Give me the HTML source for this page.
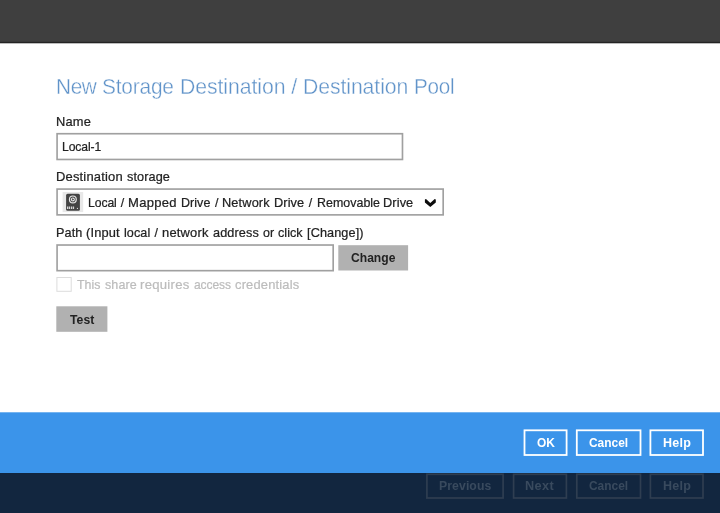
<!DOCTYPE html>
<html><head><meta charset="utf-8">
<style>
html,body{margin:0;padding:0;}
body{width:720px;height:513px;overflow:hidden;background:#fff;position:relative;font-family:"Liberation Sans",sans-serif;color:#1a1a1a;}
.abs{position:absolute;}
#shapes{left:0;top:0;}
.t{position:absolute;will-change:transform;-webkit-text-stroke:0.22px currentColor;white-space:nowrap;font-size:12.4px;line-height:16px;color:#222;letter-spacing:0.25px;}
.b{font-weight:bold;font-size:12px;letter-spacing:0;-webkit-text-stroke:0;}
#title{left:57px;top:73.2px;width:420px;height:28px;font-size:21.6px;color:#6093c9;line-height:28px;letter-spacing:0.34px;-webkit-text-stroke:0.35px #fff;}
.t{left:0;width:720px;height:16px;}
.t span{position:absolute;top:0;display:inline-block;transform-origin:0 0;}
</style></head><body>
<svg id="shapes" class="abs" width="720" height="513" viewBox="0 0 720 513">
<rect x="0" y="0" width="720" height="43" fill="#3f3f3f"/>
<rect x="0" y="41.8" width="720" height="1.5" fill="#242424"/>
<g fill="#fff" stroke="#a0a0a0" stroke-width="1.65">
<rect x="57.08" y="133.72" width="345.4" height="25.75"/>
<rect x="57.08" y="189.07" width="386.1" height="25.8"/>
<rect x="57.08" y="245.02" width="276.1" height="25.65"/>
</g>
<!-- drive icon -->
<rect x="62.6" y="192" width="20.6" height="20.1" fill="#e8e8e8"/>
<rect x="66.1" y="193.7" width="13.8" height="17" rx="1.5" fill="#434343"/>
<circle cx="72.85" cy="199.4" r="3.4" fill="none" stroke="#e6e6e6" stroke-width="1.2"/>
<circle cx="72.85" cy="199.4" r="2" fill="#e6e6e6"/>
<path d="M72.1 198.3 L74.3 199.4 L72.1 200.5 Z" fill="#434343"/>
<rect x="67" y="206.5" width="1.3" height="2.5" fill="#d6d6d6"/>
<rect x="68.8" y="206.5" width="1.3" height="2.5" fill="#d6d6d6"/>
<rect x="70.9" y="206.5" width="1.3" height="2.5" fill="#d6d6d6"/>
<rect x="72.8" y="206.5" width="1.3" height="2.5" fill="#d6d6d6"/>
<rect x="76.9" y="207.9" width="1.1" height="1.1" fill="#d6d6d6"/>
<!-- chevron -->
<path d="M424.9 199.6 L426 199.1 L430.3 202.9 L434.7 199.1 L435.8 199.6 L435.8 202.6 L430.3 207 L424.9 202.6 Z" fill="#0c0c0c"/>
<!-- buttons -->
<rect x="338.3" y="245.2" width="69.8" height="25.3" fill="#b1b1b1"/>
<rect x="56.3" y="306.3" width="51.1" height="25.5" fill="#b1b1b1"/>
<!-- checkbox -->
<rect x="56.9" y="277.5" width="14.3" height="13.8" fill="#fff" stroke="#dcdcdc" stroke-width="1"/>
<!-- bars -->
<rect x="0" y="412.3" width="720" height="61" fill="#3b94ea"/>
<rect x="0" y="473" width="720" height="40" fill="#12263f"/>
<g fill="none" stroke="#fff" stroke-width="1.8">
<rect x="524.5" y="430.3" width="42.1" height="24.7"/>
<rect x="576.8" y="430.3" width="63.7" height="24.7"/>
<rect x="650.4" y="430.3" width="52.6" height="24.7"/>
</g>
<g fill="none" stroke="#2f3e51" stroke-width="1.7">
<rect x="426.9" y="474.3" width="76.2" height="23.7"/>
<rect x="513.6" y="474.3" width="52.8" height="23.7"/>
<rect x="576.8" y="474.3" width="63.7" height="23.7"/>
<rect x="650.4" y="474.3" width="52.6" height="23.7"/>
</g>
</svg>
<div class="t" id="title"><span style="left:-0.95px;letter-spacing:-0.360px;transform:scaleX(0.9620);">New</span> <span style="left:45.30px;letter-spacing:-0.187px;transform:scaleX(0.9655);">Storage</span> <span style="left:122.65px;letter-spacing:-0.075px;transform:scaleX(0.9832);">Destination</span> <span style="left:234.15px;">/</span> <span style="left:245.95px;letter-spacing:-0.084px;transform:scaleX(0.9822);">Destination</span> <span style="left:357.05px;letter-spacing:-0.250px;transform:scaleX(0.9554);">Pool</span></div>

<div class="t" id="l1" style="top:114px;"><span style="left:56.00px;letter-spacing:0.200px;transform:scaleX(1.0385);">Name</span></div>
<div class="t" id="l2" style="top:139px;"><span style="left:62.45px;letter-spacing:-0.093px;transform:scaleX(0.9795);">Local-1</span></div>
<div class="t" id="l3" style="top:169.4px;"><span style="left:56.00px;letter-spacing:0.176px;transform:scaleX(1.0450);">Destination</span> <span style="left:126.65px;letter-spacing:0.090px;transform:scaleX(1.0230);">storage</span></div>
<div class="t" id="l4" style="top:195px;"><span style="left:87.65px;letter-spacing:-0.075px;transform:scaleX(0.9821);">Local</span> <span style="left:120.80px;">/</span> <span style="left:128.25px;letter-spacing:0.300px;transform:scaleX(1.0503);">Mapped</span> <span style="left:180.50px;letter-spacing:0.060px;transform:scaleX(1.0072);">Drive</span> <span style="left:214.88px;">/</span> <span style="left:222.20px;letter-spacing:0.137px;transform:scaleX(1.0296);">Network</span> <span style="left:273.75px;letter-spacing:0.080px;transform:scaleX(1.0305);">Drive</span> <span style="left:308.68px;">/</span> <span style="left:316.50px;letter-spacing:0.022px;transform:scaleX(1.0024);">Removable</span> <span style="left:383.30px;letter-spacing:0.115px;transform:scaleX(1.0283);">Drive</span></div>
<div class="t" id="l5" style="top:225px;"><span style="left:56.00px;letter-spacing:0.100px;transform:scaleX(1.0206);">Path</span> <span style="left:85.65px;letter-spacing:0.148px;transform:scaleX(1.0375);">(Input</span> <span style="left:124.45px;letter-spacing:0.080px;transform:scaleX(1.0143);">local</span> <span style="left:154.62px;">/</span> <span style="left:161.75px;letter-spacing:0.203px;transform:scaleX(1.0420);">network</span> <span style="left:212.60px;letter-spacing:0.117px;transform:scaleX(1.0227);">address</span> <span style="left:262.85px;letter-spacing:-0.040px;transform:scaleX(1.0049);">or</span> <span style="left:278.10px;letter-spacing:0.040px;transform:scaleX(1.0125);">click</span> <span style="left:307.35px;letter-spacing:0.100px;transform:scaleX(1.0233);">[Change])</span></div>
<div class="t b" id="b1" style="top:250px;"><span style="left:351.20px;letter-spacing:0.020px;transform:scaleX(1.0058);">Change</span></div>
<div class="t" id="l6" style="top:276.5px;color:#bcbcbc;"><span style="left:77.00px;letter-spacing:0.013px;transform:scaleX(0.9979);">This</span> <span style="left:104.50px;letter-spacing:0.090px;transform:scaleX(1.0098);">share</span> <span style="left:140.25px;letter-spacing:0.254px;transform:scaleX(1.0582);">requires</span> <span style="left:193.75px;letter-spacing:-0.092px;transform:scaleX(0.9719);">access</span> <span style="left:235.20px;letter-spacing:0.166px;transform:scaleX(1.0420);">credentials</span></div>
<div class="t b" id="b2" style="top:312px;"><span style="left:69.90px;letter-spacing:0.073px;transform:scaleX(1.0146);">Test</span></div>
<div class="t b" id="w1" style="top:435px;color:#fff;"><span style="left:536.80px;letter-spacing:-0.020px;transform:scaleX(0.9942);">OK</span></div>
<div class="t b" id="w2" style="top:435px;color:#fff;"><span style="left:588.90px;letter-spacing:-0.016px;transform:scaleX(0.9961);">Cancel</span></div>
<div class="t b" id="w3" style="top:435px;color:#fff;"><span style="left:662.65px;letter-spacing:0.273px;transform:scaleX(1.0427);">Help</span></div>
<div class="t b" id="d1" style="top:478.3px;color:#394a5e;"><span style="left:438.65px;letter-spacing:0.097px;transform:scaleX(1.0179);">Previous</span></div>
<div class="t b" id="d2" style="top:478.3px;color:#394a5e;"><span style="left:525.35px;letter-spacing:0.340px;transform:scaleX(1.0610);">Next</span></div>
<div class="t b" id="d3" style="top:478.3px;color:#394a5e;"><span style="left:588.90px;letter-spacing:-0.016px;transform:scaleX(0.9961);">Cancel</span></div>
<div class="t b" id="d4" style="top:478.3px;color:#394a5e;"><span style="left:662.65px;letter-spacing:0.273px;transform:scaleX(1.0427);">Help</span></div>
</body></html>
